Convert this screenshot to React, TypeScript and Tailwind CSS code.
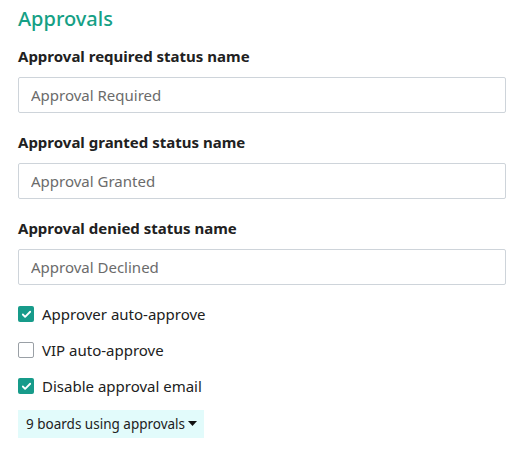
import { Check } from "lucide-react";

const font = { fontFamily: '"Segoe UI", "Noto Sans", "Open Sans", sans-serif' };

function Field({ label, value }: { label: string; value: string }) {
    return (
        <div className="mb-[19px]">
            <label className="block text-[15px] font-bold text-[#212121] leading-[20px] mb-[11px]">{label}</label>
            <input
                readOnly
                value={value}
                className="block w-[488px] h-[36px] px-[12px] border border-[#ced4da] rounded-[2px] text-[15px] text-[#6b6b6b] bg-white outline-none"
            />
        </div>
    );
}

function Box({ checked, label }: { checked: boolean; label: string }) {
    return (
        <div className="flex items-center h-[20px]">
            {checked ? (
                <span className="w-[16px] h-[16px] rounded-[2px] bg-[#179b8a] flex items-center justify-center">
                    <Check size={11} strokeWidth={4} color="white" />
                </span>
            ) : (
                <span className="w-[16px] h-[16px] rounded-[2px] border border-[#9aa0a6] bg-white" />
            )}
            <span className="ml-[8px] text-[15px] text-[#212121]">{label}</span>
        </div>
    );
}

export default function App() {
    return (
        <div className="w-[527px] h-[454px] bg-white px-[18px] pt-[6px]" style={font}>
            <h2 className="text-[20px] leading-[26px] text-[#15a085] font-medium mb-[14px]">Approvals</h2>
            <Field label="Approval required status name" value="Approval Required" />
            <Field label="Approval granted status name" value="Approval Granted" />
            <Field label="Approval denied status name" value="Approval Declined" />
            <div className="flex flex-col gap-[16px]">
                <Box checked label="Approver auto-approve" />
                <Box checked={false} label="VIP auto-approve" />
                <Box checked label="Disable approval email" />
            </div>
            <button className="mt-[14px] flex items-center h-[28px] pl-[8px] pr-[7px] bg-[#e2fbfb] text-[13.5px] text-[#212121]">
                9 boards using approvals
                <svg width="9" height="6" viewBox="0 0 9 6" className="ml-[3px]"><path d="M0 0h9L4.5 5z" fill="#111" /></svg>
            </button>
        </div>
    );
}
